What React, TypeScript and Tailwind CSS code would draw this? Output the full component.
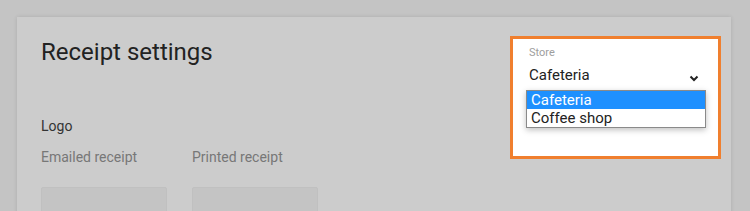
import React from 'react';

const options = ['Cafeteria', 'Coffee shop'];

export default function App() {
  return (
    <div className="min-h-[211px] h-[211px] overflow-hidden bg-[#c4c4c4] pl-[17px] pt-[17px] font-['Roboto',sans-serif]">
      <div className="w-[714px] h-[220px] bg-[#cccccc] shadow-[0_0_4px_rgba(0,0,0,0.12)] pl-[24px] pr-[10px] pt-[19px]">
        {/* Header */}
        <div className="flex justify-between items-start">
          <h1 className="text-[24px] leading-[32px] text-[#222] font-normal">Receipt settings</h1>

          {/* Store picker, highlighted */}
          <div className="w-[211px] h-[123px] border-[3px] border-[#f07f2e] bg-white pl-[16px] pr-[18px] pt-[6px]">
            <div className="text-[11px] leading-[16px] text-[#9e9e9e]">Store</div>
            <div className="flex items-center justify-between mt-[4px] h-[20px]">
              <span className="text-[15px] leading-[20px] text-[#222]">Cafeteria</span>
              <svg width="10" height="7" viewBox="0 0 10 7" className="mt-[6px] mr-[1px]">
                <path d="M1.5 1.5 L5 5 L8.5 1.5" fill="none" stroke="#222" strokeWidth="2" />
              </svg>
            </div>
            <ul className="mt-[5px] -ml-[3px] w-[180px] border border-[#8a8a8a] bg-white shadow-[0_2px_6px_rgba(0,0,0,0.25)]">
              {options.map((o, i) => (
                <li
                  key={o}
                  className={
                    i === 0
                      ? 'h-[18px] pl-[4px] text-[15px] leading-[18px] bg-[#1e90ff] text-white'
                      : 'h-[18px] pl-[4px] text-[15px] leading-[18px] text-[#222]'
                  }
                >
                  {o}
                </li>
              ))}
            </ul>
          </div>
        </div>

        {/* Logo section */}
        <div className="-mt-[43px]">
          <div className="text-[14px] leading-[20px] text-[#333]">Logo</div>
          <div className="flex gap-[25px] mt-[11px]">
            {['Emailed receipt', 'Printed receipt'].map((label) => (
              <div key={label} className="w-[126px]">
                <div className="text-[14px] leading-[20px] text-[#777]">{label}</div>
                <div className="mt-[20px] h-[60px] rounded-[2px] border border-[#c0c0c0] bg-[#c4c4c4]" />
              </div>
            ))}
          </div>
        </div>
      </div>
    </div>
  );
}
